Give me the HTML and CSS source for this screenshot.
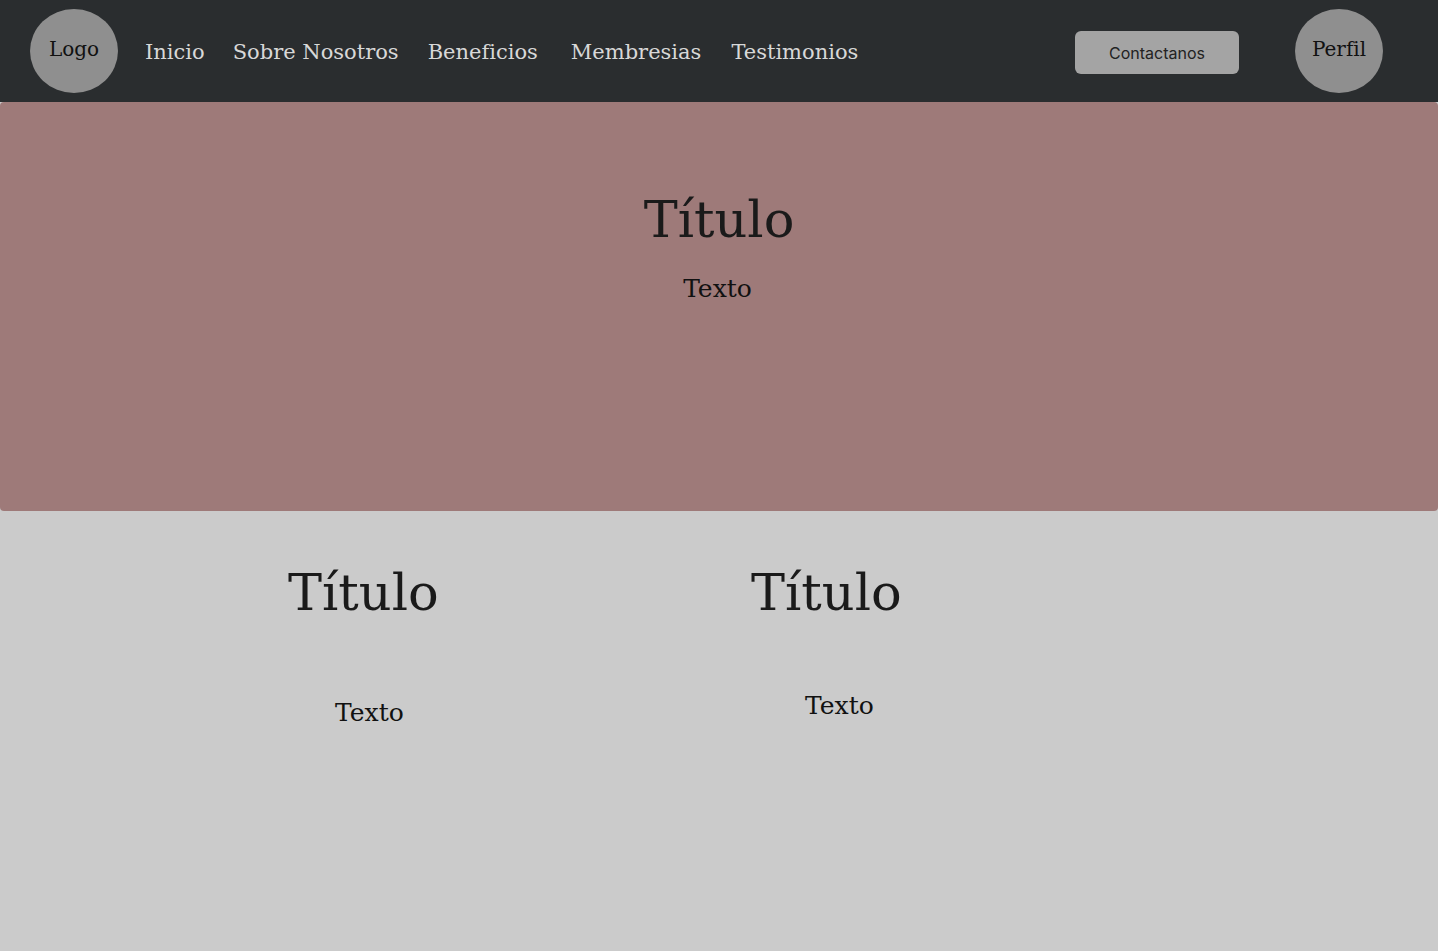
FILE: index.html
```html
<!DOCTYPE html>
<html lang="es">
<head>
<meta charset="utf-8">
<title>Inicio</title>
<link rel="stylesheet" href="styles.css">
</head>
<body>
<header class="nav">
  <div class="circle logo">Logo</div>
  <nav class="links">
    <a class="link l1" href="#">Inicio</a>
    <a class="link l2" href="#">Sobre Nosotros</a>
    <a class="link l3" href="#">Beneficios</a>
    <a class="link l4" href="#">Membresias</a>
    <a class="link l5" href="#">Testimonios</a>
  </nav>
  <button class="contact">Contactanos</button>
  <div class="circle perfil">Perfil</div>
</header>
<section class="hero">
  <h1 class="title">Título</h1>
  <p class="text">Texto</p>
</section>
<section class="cols">
  <div class="col col1">
    <h2 class="title">Título</h2>
    <p class="text">Texto</p>
  </div>
  <div class="col col2">
    <h2 class="title">Título</h2>
    <p class="text">Texto</p>
  </div>
</section>
</body>
</html>
```
FILE: styles.css
```css
* { box-sizing: border-box; }
html, body { margin: 0; padding: 0; }
body {
  background: #cbcbcb;
  font-family: "DejaVu Serif", "Liberation Serif", serif;
  color: #1a1a1a;
  height: 951px;
  overflow: hidden;
}
.nav {
  height: 102px;
  background: #2a2d2f;
  display: flex;
  align-items: center;
  padding: 0 0 0 30px;
}
.circle {
  width: 88px;
  height: 84px;
  border-radius: 50%;
  background: #8f8f8f;
  display: flex;
  align-items: center;
  justify-content: center;
  font-size: 20px;
  color: #111;
  padding-bottom: 4px;
}
.links {
  display: flex;
  margin-left: 27px;
  padding-top: 2px;
}
.link {
  color: #d8d8d8;
  text-decoration: none;
  font-size: 21px;
}
.l1 { margin-right: 28px; }
.l2 { margin-right: 29px; }
.l3 { margin-right: 33px; }
.l4 { margin-right: 30px; }
.contact {
  margin-left: auto;
  margin-top: 3px;
  width: 164px;
  height: 43px;
  border: none;
  border-radius: 6px;
  background: #a4a4a4;
  color: #222;
  font-family: Inter, "Open Sans", sans-serif;
  font-size: 16px;
  padding: 0;
}
.perfil { margin-left: 56px; margin-right: 55px; }
.hero {
  height: 409px;
  background: #9e7a79;
  border-radius: 4px;
  text-align: center;
  padding-top: 88px;
}
.title {
  margin: 0;
  font-weight: normal;
  font-size: 51px;
  line-height: 60px;
  color: #1a1a1a;
}
.text {
  margin: 0;
  font-size: 25px;
  line-height: 34px;
  color: #111;
}
.hero .text { margin-top: 22px; margin-right: 3px; }
.cols {
  display: flex;
  padding-top: 52px;
}
.col { display: flex; flex-direction: column; align-items: flex-start; }
.col1 { margin-left: 288px; width: 463px; }
.col1 .text { margin-left: 47px; margin-top: 73px; }
.col2 .text { margin-left: 54px; margin-top: 66px; }
```
